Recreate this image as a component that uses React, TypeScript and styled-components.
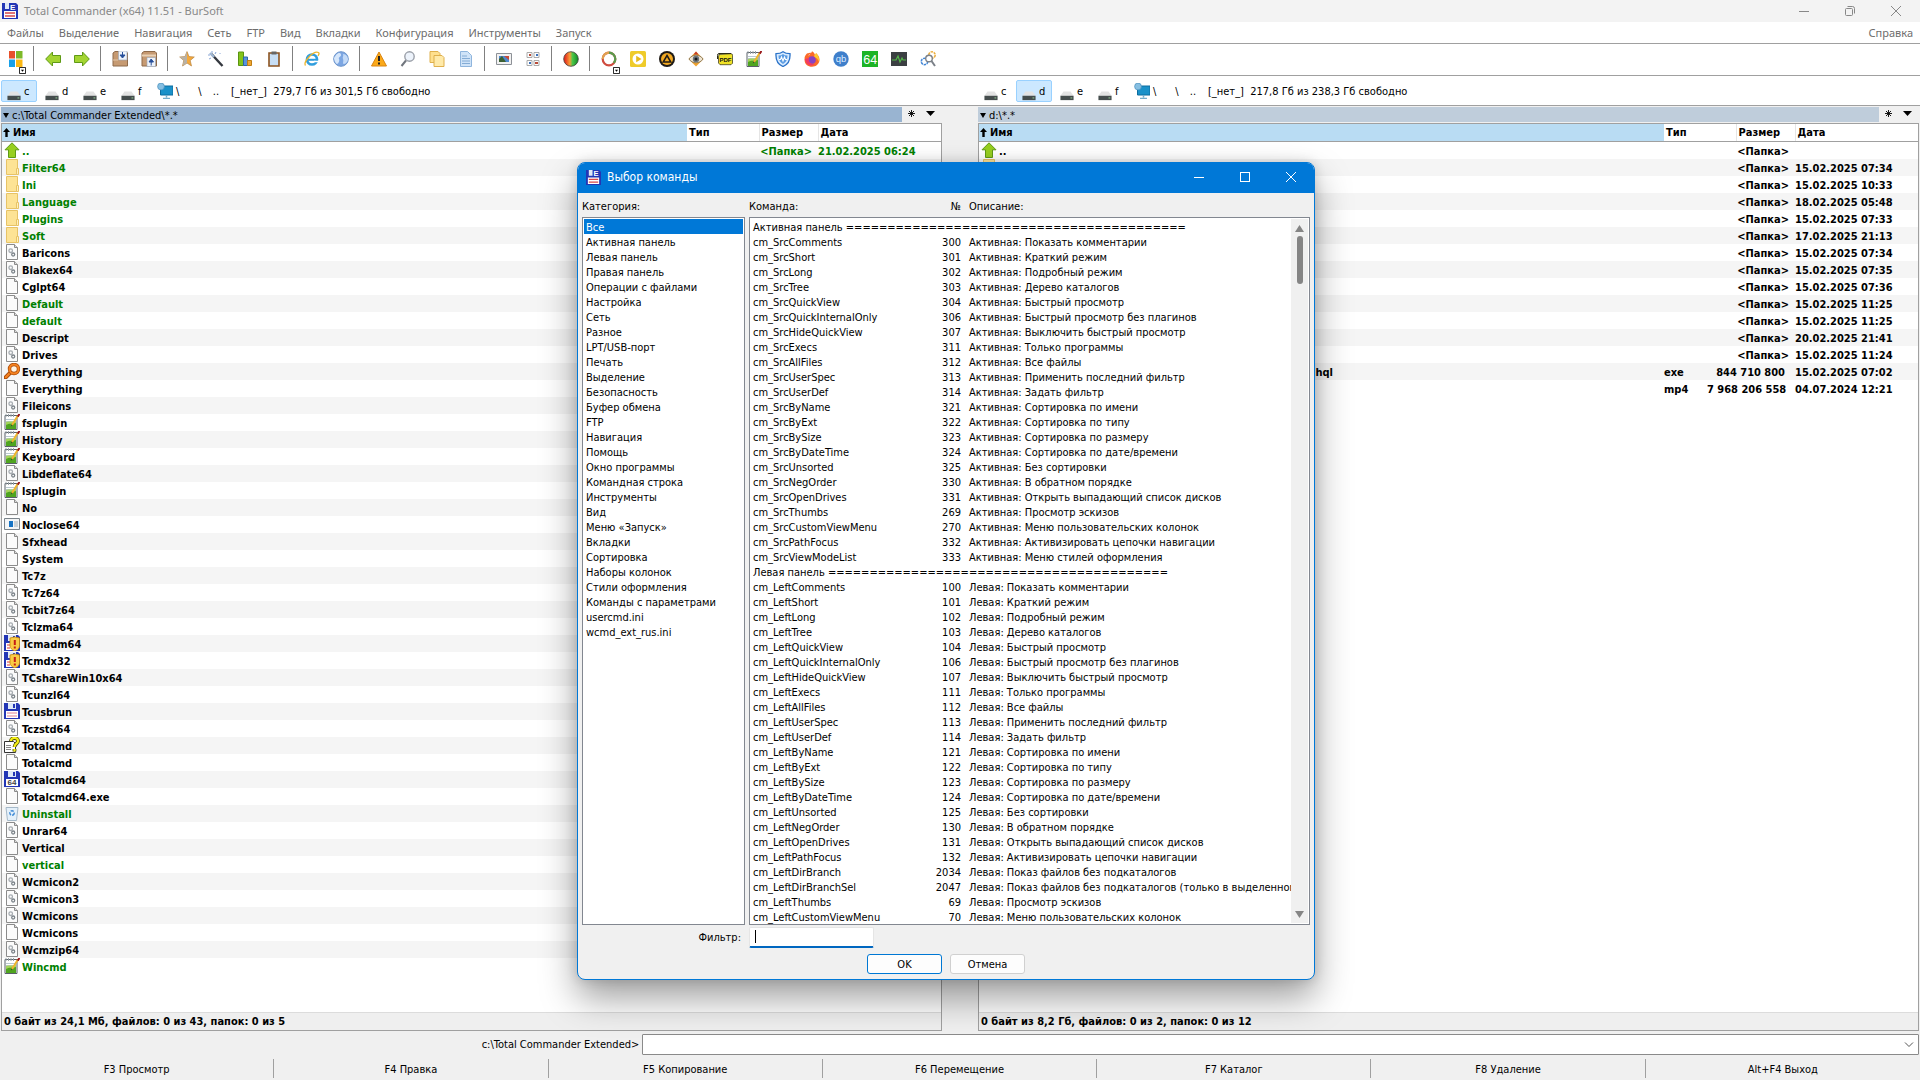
import React from 'react';
import styled, { createGlobalStyle } from 'styled-components';

const Global = createGlobalStyle`
  *, *::before, *::after { box-sizing: border-box; }
  body { margin: 0; background: #f0f0f0; }
  body, button, input, table { font: 11px/15px "DejaVu Sans Condensed", "DejaVu Sans", sans-serif; color: #000; }
  button { border: 0; padding: 0; background: none; }
  svg { display: block; flex: none; }
`;

/* ---------- icons ---------- */

type IconName = string;

const floppy = (
  <>
    <path d="M0 0h14l2 2v14H0z" fill="#2336b5" />
    <path d="M4 0h8v6H4z" fill="#dfe9f7" />
    <path d="M9 1h2v4H9z" fill="#2336b5" />
    <path d="M2 8h12v7H2z" fill="#fff" />
  </>
);
const page = (
  <>
    <path d="M2.500.5h8l3 3v12h-11z" fill="#fbfbfb" stroke="#8b8b8b" />
    <path d="M10.500.5v3h3" fill="#ddd" stroke="#8b8b8b" />
  </>
);
const notepad = (
  <>
    <path d="M1 1.500h12v14H1z" fill="#fff" stroke="#596068" />
    <path d="M2 0v3M4.500 0v3M7 0v3M9.500 0v3" stroke="#9aa3a8" />
    <path d="M2 5.500h9M2 7.500h8" stroke="#b9c8d0" />
    <path d="M2 8c3-1 7 0 10-1v8H2z" fill="#a5d45c" />
    <path d="M2 11c3-2 7-1 10-2v6H2z" fill="#4fa51f" />
    <path d="M14 1.500L8 11" stroke="#efb52c" strokeWidth="2" />
    <path d="M15.500 0l-1.800 2.600" stroke="#99181b" strokeWidth="2" />
    <path d="M7.600 10.500l-.8 2 1.800-1.200z" fill="#333" />
  </>
);

const drawings: Record<IconName, React.ReactNode> = {
  app: (
    <>
      <path d="M0 0h14l2 2v14H0z" fill="#2336b5" />
      <path d="M3 0h4v6H3z" fill="#dfe9f7" />
      <text x="8" y="6.500" fontSize="8" fontWeight="700" fill="#fff">E</text>
      <path d="M2 8h12v7H2z" fill="#fff" />
      <path d="M3 10h10M3 13h10" stroke="#d94848" strokeWidth="1.400" />
    </>
  ),
  floppy: <>{floppy}<path d="M3 10h10M3 13h10" stroke="#e08090" /></>,
  floppy64: <>{floppy}<text x="3.500" y="14.300" fontSize="8" fontWeight="700" fill="#444">64</text></>,
  admin: <>{floppy}<path d="M3 10h3M3 13h3" stroke="#d33" /><path d="M6 3l4.500-1L15.500 3v8c0 2-2 4-4.700 5C8 15 6 13 6 11z" fill="#f9cb45" stroke="#c48309" strokeWidth=".8" /><path d="M10.800 5v5M10.800 11.500v2" stroke="#c51d16" strokeWidth="2" /></>,
  windows: <><path d="M2 0h6v7.500H2z" fill="#e8502a" /><path d="M9 0h6.500v7.500H9z" fill="#7db928" /><path d="M2 8.500h6V16H2z" fill="#18a0e8" /><path d="M9 8.500h6.500V16H9z" fill="#fcb813" /></>,
  back: <path d="M.7 8L7.500 1v3.500h8v7h-8V15z" fill="#a3d431" stroke="#5f9a16" />,
  forward: <path d="M15.300 8L8.500 1v3.500h-8v7h8V15z" fill="#a3d431" stroke="#5f9a16" />,
  up: <path d="M8 .8l7 7h-3.500v7.700h-7V7.800H1z" fill="#97cf1f" stroke="#5f9a16" />,
  pack: <><path d="M1 2l2-1.500h11L15.500 2v13H1z" fill="#c69a72" stroke="#8e6a4a" /><path d="M6.500 0H15v9H6.500z" fill="#eef3fa" stroke="#98a6b8" strokeWidth=".6" /><path d="M10.500 1v3.500M8 4l2.500 3L13 4z" stroke="#274f9a" fill="#274f9a" /><path d="M1 9h5" stroke="#e4c8a8" /></>,
  unpack: <><path d="M1 2l2-1.500h11L15.500 2v13H1z" fill="#c69a72" stroke="#8e6a4a" /><path d="M1 4.500h14" stroke="#e9d1b5" strokeWidth="2" /><path d="M6 6.500h8.500v9H6z" fill="#eef3fa" stroke="#98a6b8" strokeWidth=".6" /><path d="M10.200 14.500V11M8 11l2.200-3 2.300 3z" stroke="#274f9a" fill="#274f9a" /></>,
  star: <><path d="M8 .6l2 5 5.300.4-4.100 3.500 1.300 5.500L8 12 3.500 15l1.300-5.500L.7 6l5.300-.4z" fill="#f5a93b" stroke="#b78544" strokeWidth=".7" /><path d="M8 .6l-2 5L.7 6l4.100 3.500L3.500 15 8 12z" fill="#b8b1a5" /></>,
  wand: <><path d="M3.500 3l11 12" stroke="#34383f" strokeWidth="2.400" /><path d="M2 2l4 4" stroke="#9fb6d3" strokeWidth="2.400" /><path d="M4 0v2M0 4h2M8 1L7 3M1 8l2-1M12 2v1" stroke="#8aa6d6" /></>,
  bars: <><path d="M1.500 1h5v13.500h-5z" fill="#83c41c" stroke="#5a9410" /><path d="M6.500 6h4v8.500h-4z" fill="#5a94dd" stroke="#2b66ad" /><path d="M10.500 9.500h4v5h-4z" fill="#f0a732" stroke="#bf7d13" /></>,
  clipboard: <><path d="M3 2h10v13H3z" fill="#c7def5" stroke="#8c5320" strokeWidth="1.600" /><path d="M5.500.5h5v3h-5z" fill="#666" /></>,
  ie: <><circle cx="8" cy="8.500" r="5" fill="none" stroke="#319ede" strokeWidth="2.700" /><path d="M4 8.800h9.500" stroke="#319ede" strokeWidth="2" /><path d="M10 10.500h5" stroke="#fff" strokeWidth="1.500" /><path d="M1.500 14.500C-1 11 9-.5 14.500 1.500c1 .8.200 2.500-.5 3.500" fill="none" stroke="#efb62b" strokeWidth="1.300" /></>,
  globe: <><circle cx="8" cy="8" r="7.300" fill="#7ca6e2" stroke="#6c94cb" /><path d="M3 4c3-3 5-2 5 0S5 6 6 8s-1 5-2 5-3-4-3-6z" fill="#d6e7fb" /><path d="M10 3c3 0 5 3 5 5s-2 5-4 5 0-3-1-5 1-3 0-5z" fill="#c3daf7" /></>,
  warning: <><path d="M8 1l7.500 14H.5z" fill="#fba919" stroke="#d98410" strokeLinejoin="round" /><path d="M8 5v5M8 11.500v2" stroke="#222" strokeWidth="2" /></>,
  magnifier: <><circle cx="9.500" cy="5.500" r="4.700" fill="#edf3fb" stroke="#9a9fa8" strokeWidth="1.400" /><path d="M6 9.500L1.500 15" stroke="#70757d" strokeWidth="2" /></>,
  copy: <><path d="M1 .5h8l2 2v9H1z" fill="#ffe08e" stroke="#dfb04d" /><path d="M5 4.500h8l2 2v9H5z" fill="#ffeaa9" stroke="#dfb04d" /></>,
  doc: <><path d="M2.500.5h7l4 4v11h-11z" fill="#cfe3f8" stroke="#8fb5dd" /><path d="M4 5h5M4 7.500h8M4 10h8M4 12.500h8" stroke="#84acd5" /></>,
  picture: <><path d="M.5 2.500h15v11H.5z" fill="#f1f1f1" stroke="#8d9197" /><path d="M3 5h10v6H3z" fill="#4d88cf" /><path d="M3 8l3-3 4 6H3z" fill="#3b6032" /><path d="M8 5h5v4z" fill="#c94a36" /></>,
  thumbs: <><path d="M2 1.500h5v5H2zM9 1.500h5v5H9zM2 9.500h5v5H2zM9 9.500h5v5H9z" fill="#fff" stroke="#aaa" /><path d="M4 3h2v2H4zM10 11h3v2h-3z" fill="#ba4b37" /><path d="M11 3h2v2h-2zM4 11h2v2H4z" fill="#3a70bb" /></>,
  sphere: <><defs><linearGradient id="sphere"><stop offset=".1" stopColor="#e8301f" /><stop offset=".42" stopColor="#f5a03a" /><stop offset=".6" stopColor="#4dc648" /><stop offset="1" stopColor="#0b8c26" /></linearGradient></defs><circle cx="8" cy="8" r="7.300" fill="url(#sphere)" stroke="#423c37" strokeWidth=".8" /></>,
  ring: <><circle cx="8" cy="8" r="6.300" fill="none" stroke="#cf4b3e" strokeWidth="2.200" /><path d="M1.700 8A6.300 6.300 0 018 1.700" fill="none" stroke="#e1a150" strokeWidth="2.200" /><path d="M8 1.700A6.300 6.300 0 0114.300 8c0 2-1 3-1.500 4" fill="none" stroke="#5a9b4d" strokeWidth="2.200" /></>,
  play: <><rect width="16" height="16" rx="1.500" fill="#efcb2a" /><circle cx="8" cy="8" r="5.500" fill="#fff" /><path d="M6.200 4.800L11.500 8l-5.300 3.200z" fill="#e5b91c" /></>,
  aimp: <><circle cx="8" cy="8" r="8" fill="#1f1b16" /><circle cx="8" cy="8" r="6" fill="#f2a922" /><path d="M8 4.500l3.800 6.500H4.200z" fill="none" stroke="#1f1b16" strokeWidth="1.500" /></>,
  eye: <><path d="M8 .5L15.500 8 8 15.500.5 8z" fill="#f0a32f" /><path d="M8 .5l2.500 3h-5z" fill="#c33c2a" /><path d="M1 8c3-5 11-5 14 0-3 5-11 5-14 0z" fill="#eee4d1" stroke="#7b6b4a" strokeWidth=".8" /><circle cx="8" cy="8" r="3.200" fill="#68727a" /><circle cx="8" cy="8" r="1.500" fill="#171717" /></>,
  pdf: <><path d="M2 3.500l12-.8q1.500 0 1.500 1.500v8l-1.500 1.500H3L1.500 12V6z" fill="#efe126" stroke="#2a2a15" strokeWidth=".7" /><path d="M.5 8V4.500q0-2 1.500-2h12" stroke="#2a2a15" fill="none" /><text x="2.500" y="11.300" fontSize="6" fontWeight="700" fill="#111">PDF</text></>,
  notepad,
  shield: <><path d="M8 .7c2 1.500 4.500 2 7 2 .4 6-1.500 10.500-7 12.800C2.500 13.200.6 8.700 1 2.700c2.500 0 5-.5 7-2z" fill="#d8ebff" stroke="#2b73c9" strokeWidth="1.300" /><path d="M3.500 4.500q3 0 4.500-1.500 1.500 1.500 4.500 1.500 0 6-4.500 8.500-4.500-2.500-4.500-8.500z" fill="#5a9be2" /><path d="M4 8.500h1.500l1-2.500 1.500 4 1.500-4 1 2.500H12" fill="none" stroke="#fff" strokeWidth="1.100" /></>,
  firefox: <><path d="M8 1.500C3 1.500.5 5 .5 8.700.5 13 4 15.800 8 15.800s7.500-2.800 7.500-7c0-3-1.500-5-3.500-6.800.2 1 0 2-.8 2.500C10.500 2 9 .5 8 .3 7.500 2 6 3 5 4.500c-1-.5-1.500-2-1.500-2.500C2 3 .8 5 .5 7" fill="#fb6a28" /><circle cx="8" cy="9" r="3.800" fill="#8842c2" /><path d="M.8 8c1 6 6 8 10 5.500C6 13 4 10 5 7z" fill="#f13a63" /><path d="M12 2c3 3 3.500 6 3 9-1-4-4-4-5-6z" fill="#ffc92e" /></>,
  qb: <><circle cx="8" cy="8" r="7.700" fill="#3f7fcb" /><text x="2.700" y="11" fontSize="9.500" fill="#dcecff">qb</text></>,
  aida: <><path d="M0 0h16v16H0z" fill="#1db426" /><text x="1.200" y="12.500" fontSize="12.500" fill="#fff">64</text></>,
  monitor: <><path d="M0 1h16v14H0z" fill="#3b3f42" /><path d="M1 9h4l2-4 2 6 2-4 1 2h3" fill="none" stroke="#55b749" strokeWidth="1.200" /></>,
  gear: <><circle cx="4.500" cy="10.500" r="3.200" fill="none" stroke="#4286d6" strokeWidth="1.600" strokeDasharray="2.500 .8" /><circle cx="12" cy="4" r="3.200" fill="none" stroke="#ebae40" strokeWidth="1.600" strokeDasharray="2.500 .8" /><circle cx="9" cy="7.500" r="3.300" fill="#fff" stroke="#7b8088" strokeWidth="1.400" /><path d="M11.500 10l3.500 5" stroke="#7b8088" strokeWidth="2" /></>,
  folder: <><path d="M2.500.5h11v15h-11z" fill="#fde395" stroke="#e7c366" /><path d="M12.500 9.500h2v6h-2z" fill="#fff0bd" stroke="#e7c366" /></>,
  page,
  config: <>{page}<circle cx="6.700" cy="6.700" r="1.800" fill="none" stroke="#a5abb0" strokeWidth="1.300" /><circle cx="9.200" cy="10.500" r="1.500" fill="none" stroke="#7d858b" strokeWidth="1.300" /></>,
  search: <><path d="M6.500 9.500L1.500 14.500" stroke="#a94a08" strokeWidth="4" strokeLinecap="round" /><path d="M6.500 9.500L1.800 14.200" stroke="#f58220" strokeWidth="2.200" strokeLinecap="round" /><circle cx="10" cy="6" r="4.500" fill="#fff3e3" stroke="#a94a08" strokeWidth="3.400" /><circle cx="10" cy="6" r="4.500" fill="none" stroke="#f58220" strokeWidth="2" /></>,
  window: <><path d="M.5 2.500h15v11H.5z" fill="#f3f5f6" stroke="#7b848b" /><path d="M5 5h4v6H5z" fill="#1673c4" /><path d="M10 6h4M10 8h4M10 10h4" stroke="#a3adb4" /></>,
  help: <><path d="M.5 4.500h9l2 2v9H.5z" fill="#fff" stroke="#333" /><path d="M2 8.500h5M2 10.500h5M2 12.500h5" stroke="#888" /><path d="M7 4c0-4 7-4 7 0 0 3-3.500 2.500-3.500 6M10.500 12v2.500" fill="none" stroke="#4c4a00" strokeWidth="3.800" /><path d="M7 4c0-4 7-4 7 0 0 3-3.500 2.500-3.500 6M10.500 12v2.500" fill="none" stroke="#f4ee17" strokeWidth="2.200" /></>,
  bin: <><path d="M2 2.500h12l-1.500 13h-9z" fill="#e4f0fa" stroke="#a4b8c8" /><circle cx="8" cy="8" r="2.200" fill="none" stroke="#3f8ad6" strokeWidth="1.400" strokeDasharray="3 1" /></>,
  drive: <><path d="M4 5h8l3.500 5H.5z" fill="#e3e3e3" /><path d="M.5 10h15v5H.5z" fill="#454d4d" /><path d="M12 12.500h2" stroke="#9ddb9d" /></>,
  network: <><path d="M3.500 3H16v9H3.500z" fill="#1a91c9" stroke="#0c6d9f" /><path d="M9.500 12v2.500M6 15.500h7" stroke="#76aecb" strokeWidth="1.500" /><circle cx="4" cy="3.500" r="3.400" fill="#86bfe2" stroke="#4c90bd" strokeWidth=".7" /></>,
  dropdown: <><path d="M.5.5h7v7h-7z" fill="#fff" stroke="#000" /><path d="M2.200 3.200h3.600L4 5.400z" /></>,
};

const Icon = ({ name, size = 16 }: { name: IconName; size?: number }) => (
  <svg width={size} height={size} viewBox={name === 'dropdown' ? '0 0 8 8' : '0 0 16 16'} fontFamily="Liberation Sans, sans-serif" aria-hidden="true">
    {drawings[name]}
  </svg>
);

const Caret = () => <svg width="9" height="5" viewBox="0 0 9 5"><path d="M0 0h9L4.500 5z" /></svg>;
const SmallCaret = () => <svg width="6" height="5" viewBox="0 0 6 5"><path d="M0 0h6L3 5z" /></svg>;
const Spark = () => <svg width="7" height="7" viewBox="0 0 7 7"><path d="M3.500 0v7M0 3.500h7M1 1l5 5M6 1L1 6" stroke="#000" strokeWidth=".9" /></svg>;

/* ---------- main window ---------- */

const Window = styled.div`
  min-height: 100vh;
  display: flex;
  flex-direction: column;
`;
const TitleBar = styled.header`
  height: 22px;
  display: flex;
  align-items: center;
  gap: 6px;
  padding: 0 19px 0 2px;
  background: #f3f3f3;
  color: #888;
  font: 11px/16px "Noto Sans", sans-serif;
`;
const Grow = styled.span`flex: 1;`;
const WindowButtons = styled.div`
  display: flex;
  gap: 36px;
`;
const MenuBar = styled.nav`
  height: 22px;
  display: flex;
  align-items: center;
  gap: 15px;
  padding: 0 7px;
  background: #fff;
  border-bottom: 1px solid #a0a0a0;
  button { color: #6d6d6d; font: 11px/16px "Noto Sans", sans-serif; }
`;
const ToolBar = styled.div`
  height: 32px;
  display: flex;
  align-items: center;
  padding-bottom: 2px;
  background: #fff;
  border-bottom: 1px solid #a0a0a0;
`;
const Tool = styled.button`
  position: relative;
  width: 29px;
  height: 24px;
  display: grid;
  place-items: center;
`;
const ToolBadge = styled.span`
  position: absolute;
  right: 3px;
  bottom: -3px;
`;
const ToolSeparator = styled.span`
  width: 9px;
  height: 25px;
  background: linear-gradient(#808080, #808080) center / 1px 100% no-repeat;
`;
const Split = styled.div`
  display: grid;
  grid-template-columns: minmax(0, 1fr) minmax(0, 1fr);
  column-gap: 36px;
  padding: 0 1px;
`;
const DriveBar = styled(Split)`
  height: 30px;
  align-items: center;
  background: #fff;
  border-bottom: 1px solid #a0a0a0;
`;
const Drives = styled.div`
  display: flex;
  align-items: center;
  gap: 2px;
`;
const Drive = styled.button<{ $active?: boolean }>`
  width: 36px;
  height: 22px;
  display: flex;
  align-items: center;
  gap: 3px;
  padding: 1px 0 0 5px;
  border: 1px solid ${p => (p.$active ? '#99d1ff' : 'transparent')};
  border-radius: 2px;
  background: ${p => (p.$active ? '#cce8ff' : 'none')};
  svg { align-self: flex-end; }
`;
const NetDrive = styled(Drive)`
  width: 38px;
  padding-left: 3px;
  svg { align-self: center; }
`;
const PathButton = styled.button`
  width: 14px;
  padding-top: 1px;
  text-align: center;
`;
const FreeSpace = styled.span`
  padding: 1px 0 0 6px;
  white-space: pre;
`;
const Panels = styled(Split)`
  flex: 1;
  padding-top: 1px;
`;
const Panel = styled.section`
  display: flex;
  flex-direction: column;
`;
const PathRow = styled.div`
  height: 16px;
  display: flex;
  align-items: flex-start;
  button { width: 19px; height: 15px; display: grid; place-items: center; padding-bottom: 3px; }
`;
const PathText = styled.div<{ $active?: boolean }>`
  flex: 1;
  height: 15px;
  display: flex;
  align-items: center;
  gap: 3px;
  padding: 1px 0 0 2px;
  background: ${p => (p.$active ? '#99b4d1' : '#bfcddb')};
`;
const PathTail = styled.div`
  display: flex;
  padding-right: 2px;
`;
const FileBox = styled.div`
  flex: 1;
  display: flex;
  flex-direction: column;
  border: 1px solid #a0a0a0;
  background: #fff;
`;
const FileTable = styled.table`
  width: 100%;
  table-layout: fixed;
  border-collapse: collapse;
  font-weight: 700;
  white-space: nowrap;
  th { height: 17px; padding: 1px 0 0 2px; text-align: left; line-height: 15px; border-bottom: 1px solid #a0a0a0; }
  th + th + th { border-left: 1px solid #e5e5e5; }
  th:first-child { padding-left: 1px; background: #b9dcf3; }
`;
const Col = styled.col<{ $w?: number }>`width: ${p => (p.$w ? p.$w + 'px' : 'auto')};`;
const SortedHead = styled.span`
  display: flex;
  align-items: center;
  gap: 3px;
`;
const FileRow = styled.tr<{ $green?: boolean }>`
  color: ${p => (p.$green ? '#008000' : '#000')};
  &:nth-child(even) { background: #f5f5f5; }
  td { height: 17px; padding: 2px 0 0; line-height: 15px; }
`;
const FileName = styled.span`
  height: 15px;
  display: flex;
  align-items: center;
  gap: 2px;
  padding-left: 2px;
  svg { margin-top: -2px; }
`;
const LongName = styled.span`
  min-width: 334px;
  text-align: right;
`;
const SizeCell = styled.td<{ $dir?: boolean }>`
  && { text-align: right; padding-right: ${p => (p.$dir ? 6 : 10)}px; }
`;
const StatusLine = styled.footer`
  height: 18px;
  margin-top: auto;
  padding: 1px 0 0 2px;
  border-top: 1px solid #dcdcdc;
  background: #efefef;
  font-weight: 700;
`;
const CommandLine = styled.form`
  display: grid;
  grid-template-columns: 1fr 2fr;
  gap: 3px;
  align-items: center;
  padding: 3px 1px 4px;
  label { text-align: right; }
`;
const CommandBox = styled.div`
  height: 21px;
  display: flex;
  align-items: center;
  padding-right: 4px;
  border: 1px solid #8a8a8a;
  border-radius: 1px;
  background: #fff;
  input { flex: 1; border: 0; outline: 0; background: none; }
`;
const FunctionKeys = styled.div`
  display: grid;
  grid-template-columns: repeat(7, 1fr);
  padding-bottom: 2px;
  button { height: 19px; padding-top: 1px; border-right: 1px solid #a0a0a0; }
  button:last-child { border-right: 0; }
`;

/* ---------- dialog ---------- */

const Dialog = styled.div`
  position: absolute;
  left: 577px;
  top: 162px;
  width: 738px;
  overflow: hidden;
  border: 1px solid #0078d7;
  border-radius: 8px;
  background: #f0f0f0;
  box-shadow: 0 18px 36px rgba(0, 0, 0, 0.38), 0 0 12px rgba(0, 0, 0, 0.14);
`;
const DialogTitle = styled.h1`
  height: 30px;
  margin: 0;
  display: flex;
  align-items: center;
  gap: 6px;
  padding: 0 18px 2px 8px;
  background: #0078d7;
  color: #fff;
  font: 12px/16px "DejaVu Sans Condensed", sans-serif;
`;
const DialogBody = styled.div`
  display: grid;
  grid-template-columns: 163px minmax(0, 1fr);
  column-gap: 4px;
  padding: 0 4px;
`;
const Labels = styled.div`
  height: 24px;
  display: grid;
  grid-template-columns: 163px 41px 1fr;
  align-items: center;
  column-gap: 8px;
  padding-top: 2px;
  span:nth-child(2) { text-align: right; }
`;
const ListFrame = styled.div`
  height: 708px;
  display: flex;
  padding: 1px;
  border: 1px solid #828790;
  background: #fff;
`;
const CategoryList = styled.ul`
  flex: 1;
  margin: 0;
  padding: 0;
  list-style: none;
`;
const Category = styled.li<{ $selected: boolean }>`
  padding: 2px 0 0 2px;
  line-height: 13px;
  color: ${p => (p.$selected ? '#fff' : '#000')};
  background: ${p => (p.$selected ? '#0078d7' : 'none')};
`;
const CommandTable = styled.table`
  width: 100%;
  table-layout: fixed;
  border-collapse: collapse;
  white-space: nowrap;
  td { height: 15px; padding: 2px 0 0; line-height: 13px; }
  td:first-child { padding-left: 2px; }
  td:nth-child(2) { text-align: right; }
  td:nth-child(3) { padding-left: 8px; }
`;
const TableClip = styled.div`
  flex: 1;
  min-width: 0;
`;
const ScrollTrack = styled.div`
  width: 17px;
  display: flex;
  flex-direction: column;
  align-items: center;
  padding: 6px 0 5px;
  background: #f0f0f0;
`;
const ScrollThumb = styled.span`
  width: 6px;
  height: 48px;
  margin: 4px 0 auto;
  border-radius: 3px;
  background: #858585;
`;
const FilterRow = styled.div`
  display: grid;
  grid-template-columns: 163px 125px;
  column-gap: 8px;
  align-items: center;
  padding: 2px 0 6px;
  label { text-align: right; }
`;
const InputWrap = styled.div`
  position: relative;
  input {
    display: block;
    width: 100%;
    height: 21px;
    padding: 0 4px;
    border: 1px solid #e5e5e5;
    border-bottom: 2px solid #0067c0;
    border-radius: 2px;
    background: #fff;
    outline: 0;
  }
`;
const TextCaret = styled.span`
  position: absolute;
  left: 6px;
  top: 3px;
  width: 1px;
  height: 13px;
  background: #000;
`;
const Actions = styled.div`
  display: flex;
  gap: 8px;
  justify-content: center;
  padding-bottom: 5px;
`;
const PushButton = styled.button<{ $primary?: boolean }>`
  width: 75px;
  height: 20px;
  border: 1px solid ${p => (p.$primary ? '#0078d4' : '#d0d0d0')};
  border-radius: 3px;
  background: #fdfdfd;
`;

/* ---------- data ---------- */

const menu = 'Файлы,Выделение,Навигация,Сеть,FTP,Вид,Вкладки,Конфигурация,Инструменты,Запуск'.split(',');
const tools = 'windows+,|,back,forward,|,pack,unpack,|,star,wand,bars,clipboard,|,ie,globe,|,warning,magnifier,copy,doc,|,picture,thumbs,|,sphere,|,ring+,play,aimp,eye,pdf,notepad,shield,firefox,qb,aida,monitor,gear'.split(',');

type FileItem = { name: string; icon: IconName; green?: boolean; ext?: string; size?: string; date?: string; long?: boolean };

const leftFiles: FileItem[] = [
  { name: '..', icon: 'up', green: true, size: '<Папка>', date: '21.02.2025 06:24' },
  ...`Filter64:folder:g Ini:folder:g Language:folder:g Plugins:folder:g Soft:folder:g Baricons:config Blakex64:config Cglpt64:page
  Default:page:g default:page:g Descript:page Drives:config Everything:search Everything:page Fileicons:config fsplugin:notepad
  History:notepad Keyboard:notepad Libdeflate64:config lsplugin:notepad No:page Noclose64:window Sfxhead:page System:page Tc7z:page
  Tc7z64:config Tcbit7z64:config Tclzma64:config Tcmadm64:admin Tcmdx32:admin TCshareWin10x64:config Tcunzl64:config Tcusbrun:floppy
  Tczstd64:config Totalcmd:help Totalcmd:page Totalcmd64:floppy64 Totalcmd64.exe:page Uninstall:bin:g Unrar64:config Vertical:page
  vertical:page:g Wcmicon2:config Wcmicon3:config Wcmicons:config Wcmicons:page Wcmzip64:config Wincmd:notepad:g`
    .split(/\s+/)
    .map(entry => {
      const [name, icon, green] = entry.split(':');
      return { name, icon, green: green === 'g' };
    }),
];
const rightFiles: FileItem[] = [
  { name: '..', icon: 'up', size: '<Папка>' },
  ...['15.02.2025 07:34', '15.02.2025 10:33', '18.02.2025 05:48', '15.02.2025 07:33', '17.02.2025 21:13', '15.02.2025 07:34', '15.02.2025 07:35', '15.02.2025 07:36', '15.02.2025 11:25', '15.02.2025 11:25', '20.02.2025 21:41', '15.02.2025 11:24']
    .map(date => ({ name: '', icon: 'folder', size: '<Папка>', date })),
  { name: 'hql', icon: 'page', ext: 'exe', size: '844 710 800', date: '15.02.2025 07:02', long: true },
  { name: '', icon: 'page', ext: 'mp4', size: '7 968 206 558', date: '04.07.2024 12:21' },
];

const categories = 'Все,Активная панель,Левая панель,Правая панель,Операции с файлами,Настройка,Сеть,Разное,LPT/USB-порт,Печать,Выделение,Безопасность,Буфер обмена,FTP,Навигация,Помощь,Окно программы,Командная строка,Инструменты,Вид,Меню «Запуск»,Вкладки,Сортировка,Наборы колонок,Стили оформления,Команды с параметрами,usercmd.ini,wcmd_ext_rus.ini'.split(',');

const commonCommands: [string, number, string][] = [
  ['Comments', 0, 'Показать комментарии'],
  ['Short', 1, 'Краткий режим'],
  ['Long', 2, 'Подробный режим'],
  ['Tree', 3, 'Дерево каталогов'],
  ['QuickView', 4, 'Быстрый просмотр'],
  ['QuickInternalOnly', 6, 'Быстрый просмотр без плагинов'],
  ['HideQuickView', 7, 'Выключить быстрый просмотр'],
  ['Execs', 11, 'Только программы'],
  ['AllFiles', 12, 'Все файлы'],
  ['UserSpec', 13, 'Применить последний фильтр'],
  ['UserDef', 14, 'Задать фильтр'],
  ['ByName', 21, 'Сортировка по имени'],
  ['ByExt', 22, 'Сортировка по типу'],
  ['BySize', 23, 'Сортировка по размеру'],
  ['ByDateTime', 24, 'Сортировка по дате/времени'],
  ['Unsorted', 25, 'Без сортировки'],
  ['NegOrder', 30, 'В обратном порядке'],
  ['OpenDrives', 31, 'Открыть выпадающий список дисков'],
];
const section = (title: string, prefix: string, base: number, extra: [string, number, string][]) => ({
  title: `${title} панель ${'='.repeat(41)}`,
  rows: [...commonCommands.map(([n, id, d]) => [n, id + base, d] as const), ...extra].map(([n, id, d]) => ({
    name: `cm_${prefix}${n}`,
    id,
    text: `${title}: ${d}`,
  })),
});
const sections = [
  section('Активная', 'Src', 300, [
    ['Thumbs', 269, 'Просмотр эскизов'],
    ['CustomViewMenu', 270, 'Меню пользовательских колонок'],
    ['PathFocus', 332, 'Активизировать цепочки навигации'],
    ['ViewModeList', 333, 'Меню стилей оформления'],
  ]),
  section('Левая', 'Left', 100, [
    ['PathFocus', 132, 'Активизировать цепочки навигации'],
    ['DirBranch', 2034, 'Показ файлов без подкаталогов'],
    ['DirBranchSel', 2047, 'Показ файлов без подкаталогов (только в выделенном'],
    ['Thumbs', 69, 'Просмотр эскизов'],
    ['CustomViewMenu', 70, 'Меню пользовательских колонок'],
  ]),
];

/* ---------- parts ---------- */

const DriveSet = ({ active, free }: { active: string; free: string }) => (
  <Drives>
    {['c', 'd', 'e', 'f'].map(letter => (
      <Drive key={letter} $active={letter === active}><Icon name="drive" size={14} />{letter}</Drive>
    ))}
    <NetDrive><Icon name="network" />\</NetDrive>
    <PathButton>\</PathButton>
    <PathButton>..</PathButton>
    <FreeSpace>[_нет_]  {free}</FreeSpace>
  </Drives>
);

const FilePanel = ({ path, active, files, status }: { path: string; active?: boolean; files: FileItem[]; status: string }) => (
  <Panel>
    <PathRow>
      <PathText $active={active}><SmallCaret />{path}</PathText>
      <PathTail>
        <button aria-label="Избранное"><Spark /></button>
        <button aria-label="История"><Caret /></button>
      </PathTail>
    </PathRow>
    <FileBox>
      <FileTable>
        <colgroup><Col /><Col $w={43} /><Col $w={29} /><Col $w={59} /><Col $w={123} /></colgroup>
        <thead>
          <tr>
            <th><SortedHead><svg width="7" height="9" viewBox="0 0 7 9"><path d="M3.500 0L7 4H4.700v5H2.300V4H0z" /></svg>Имя</SortedHead></th>
            <th colSpan={2}>Тип</th>
            <th>Размер</th>
            <th>Дата</th>
          </tr>
        </thead>
        <tbody>
          {files.map((f, i) => (
            <FileRow key={i} $green={f.green}>
              <td><FileName><Icon name={f.icon} />{f.long ? <LongName>{f.name}</LongName> : f.name}</FileName></td>
              <td>{f.ext}</td>
              <SizeCell colSpan={2} $dir={!f.ext}>{f.size}</SizeCell>
              <td>{f.date}</td>
            </FileRow>
          ))}
        </tbody>
      </FileTable>
      <StatusLine>{status}</StatusLine>
    </FileBox>
  </Panel>
);

const SystemButtons = ({ restore }: { restore?: boolean }) => {
  const stroke = restore ? '#888' : '#fff';
  return (
    <WindowButtons>
      <button aria-label="Свернуть"><svg width="10" height="10" fill="none" stroke={stroke}><path d="M0 5.500h10" /></svg></button>
      <button aria-label="Развернуть">
        <svg width="10" height="10" fill="none" stroke={stroke}>
          {restore ? <><rect x=".5" y="2.500" width="7" height="7" rx="1" /><path d="M2.500.5h5q2 0 2 2v5" /></> : <rect x=".5" y=".5" width="9" height="9" />}
        </svg>
      </button>
      <button aria-label="Закрыть"><svg width="10" height="10" fill="none" stroke={stroke}><path d="M0 0l10 10M10 0L0 10" /></svg></button>
    </WindowButtons>
  );
};

const CommandDialog = () => (
  <Dialog role="dialog" aria-label="Выбор команды">
    <DialogTitle><Icon name="app" size={15} />Выбор команды<Grow /><SystemButtons /></DialogTitle>
    <DialogBody>
      <Labels><span>Категория:</span></Labels>
      <Labels><span>Команда:</span><span>№</span><span>Описание:</span></Labels>
      <ListFrame>
        <CategoryList role="listbox" aria-label="Категория">
          {categories.map((c, i) => <Category key={c} role="option" aria-selected={i === 0} $selected={i === 0}>{c}</Category>)}
        </CategoryList>
      </ListFrame>
      <ListFrame>
        <TableClip>
          <CommandTable>
            <colgroup><Col $w={168} /><Col $w={42} /><Col /></colgroup>
            <tbody>
              {sections.map(s => (
                <React.Fragment key={s.title}>
                  <tr><td colSpan={3}>{s.title}</td></tr>
                  {s.rows.map(r => <tr key={r.name}><td>{r.name}</td><td>{r.id}</td><td>{r.text}</td></tr>)}
                </React.Fragment>
              ))}
            </tbody>
          </CommandTable>
        </TableClip>
        <ScrollTrack>
          <svg width="9" height="7" viewBox="0 0 9 7"><path d="M4.500 0L9 7H0z" fill="#858585" /></svg>
          <ScrollThumb />
          <svg width="9" height="7" viewBox="0 0 9 7"><path d="M4.500 7L0 0h9z" fill="#858585" /></svg>
        </ScrollTrack>
      </ListFrame>
    </DialogBody>
    <FilterRow>
      <label htmlFor="filter">Фильтр:</label>
      <InputWrap><input id="filter" /><TextCaret /></InputWrap>
    </FilterRow>
    <Actions>
      <PushButton $primary>OK</PushButton>
      <PushButton>Отмена</PushButton>
    </Actions>
  </Dialog>
);

export default function App() {
  return (
    <>
      <Global />
      <Window>
        <TitleBar><Icon name="app" />Total Commander (x64) 11.51 - BurSoft<Grow /><SystemButtons restore /></TitleBar>
        <MenuBar>
          {menu.map(item => <button key={item}>{item}</button>)}
          <Grow />
          <button>Справка</button>
        </MenuBar>
        <ToolBar>
          {tools.map((tool, i) => {
            if (tool === '|') return <ToolSeparator key={i} />;
            const name = tool.replace('+', '');
            return (
              <Tool key={i} aria-label={name}>
                <Icon name={name} />
                {tool !== name && <ToolBadge><Icon name="dropdown" size={7} /></ToolBadge>}
              </Tool>
            );
          })}
        </ToolBar>
        <DriveBar>
          <DriveSet active="c" free="279,7 Гб из 301,5 Гб свободно" />
          <DriveSet active="d" free="217,8 Гб из 238,3 Гб свободно" />
        </DriveBar>
        <Panels as="main">
          <FilePanel path="c:\Total Commander Extended\*.*" active files={leftFiles} status="0 байт из 24,1 Мб, файлов: 0 из 43, папок: 0 из 5" />
          <FilePanel path="d:\*.*" files={rightFiles} status="0 байт из 8,2 Гб, файлов: 0 из 2, папок: 0 из 12" />
        </Panels>
        <CommandLine>
          <label htmlFor="command">c:\Total Commander Extended&gt;</label>
          <CommandBox>
            <input id="command" />
            <svg width="10" height="6" viewBox="0 0 10 6" fill="none" stroke="#555"><path d="M1 .5l4 4 4-4" /></svg>
          </CommandBox>
        </CommandLine>
        <FunctionKeys>
          {['F3 Просмотр', 'F4 Правка', 'F5 Копирование', 'F6 Перемещение', 'F7 Каталог', 'F8 Удаление', 'Alt+F4 Выход'].map(k => <button key={k}>{k}</button>)}
        </FunctionKeys>
      </Window>
      <CommandDialog />
    </>
  );
}
